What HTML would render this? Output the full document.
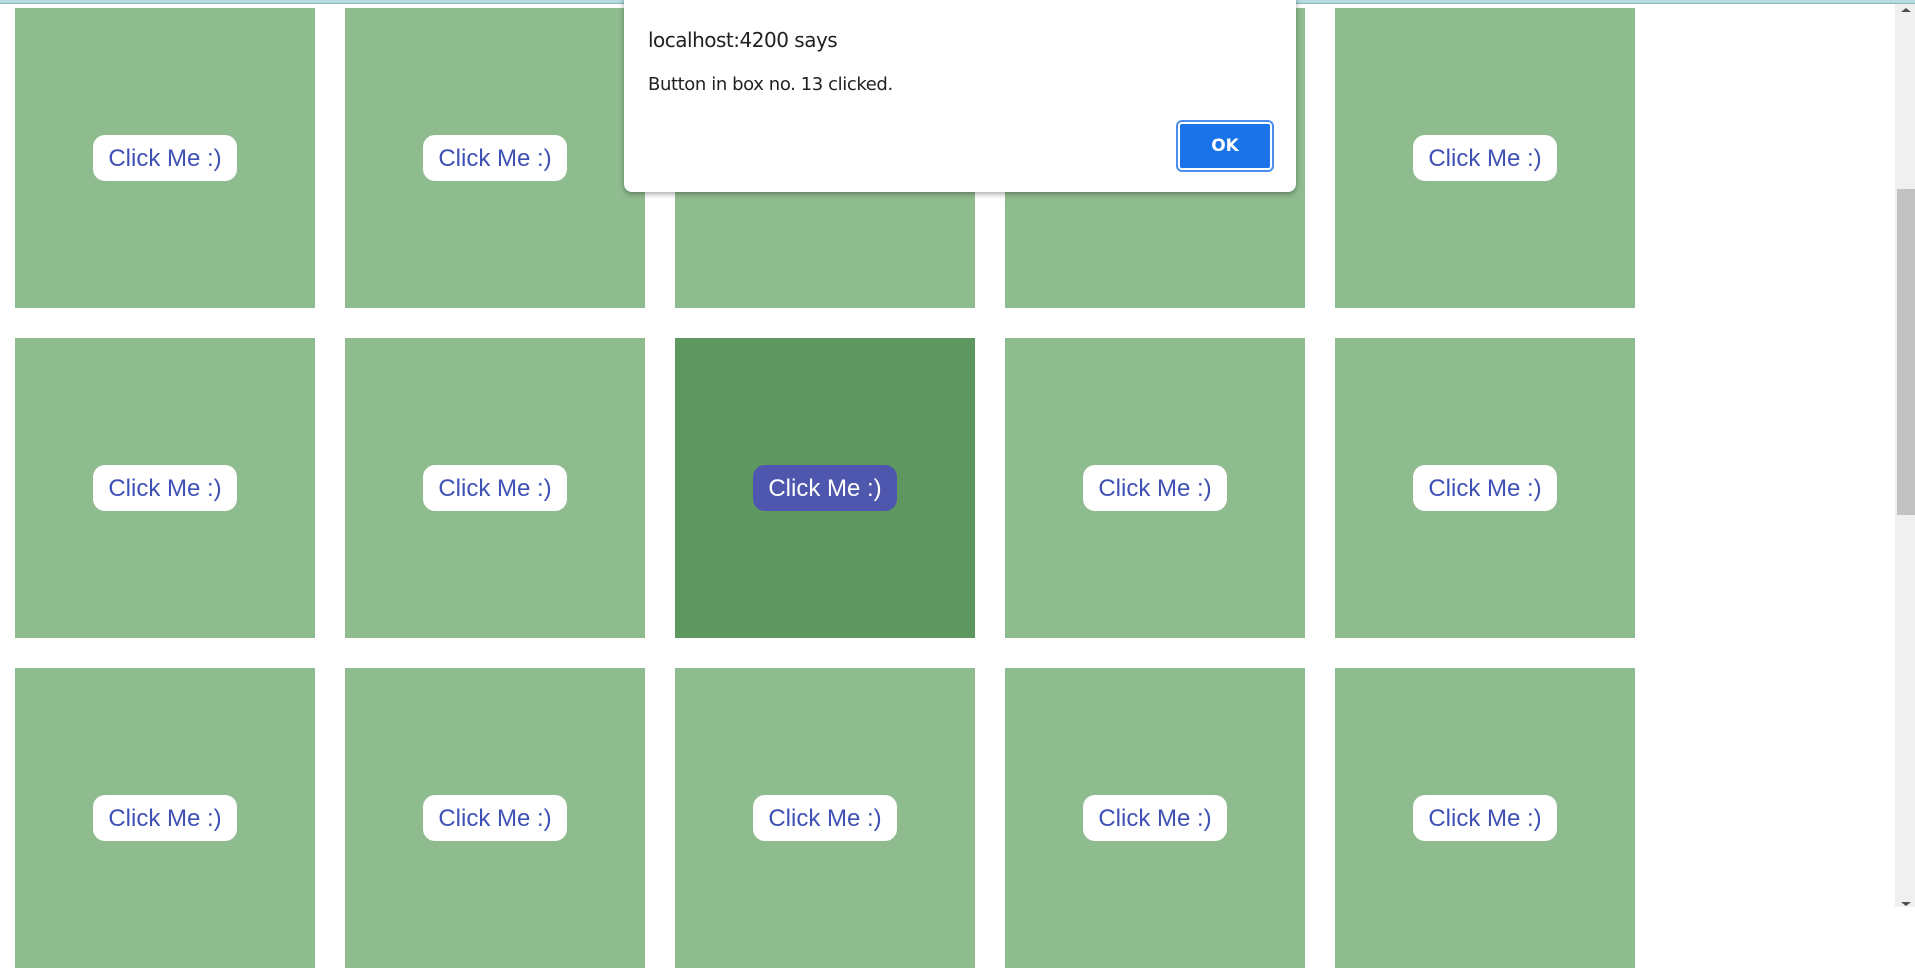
<!DOCTYPE html>
<html><head><style>
body{margin:0;width:1915px;height:907px;overflow:hidden;background:#fff;position:relative;font-family:"Liberation Sans",Arial,sans-serif}
.top{position:absolute;left:0;top:0;width:1915px;height:3px;background:#b2dce0;border-bottom:1px solid #8fb8bc}
.box{position:absolute;width:300px;height:300px;background:#8fbc8f}
.box.a{background:#5e9760}
.btn{position:absolute;left:78px;top:127px;width:144px;height:46px;border-radius:12px;background:#fff;color:#3f51b5;font-size:24px;line-height:47px;text-align:center}
.a .btn{background:#4e56ad;color:#fff}
.sb{position:absolute;left:1895px;top:4px;width:20px;height:903px;background:#f0f0f0}
.th{position:absolute;left:1897px;top:189px;width:18px;height:326px;background:#c1c1c1}
.dlg{position:absolute;left:624px;top:-4px;width:672px;height:196px;background:#fff;border-radius:0 0 8px 8px;box-shadow:0 2px 6px rgba(0,0,0,.35);font-family:"DejaVu Sans","Liberation Sans",sans-serif;color:#202124}
.t{position:absolute;left:24px;top:32px;font-size:20px;letter-spacing:-.5px}
.m{position:absolute;left:24px;top:78px;font-size:18px;letter-spacing:-.4px}
.ok{position:absolute;left:554px;top:126px;width:90px;height:44px;background:#1a73e8;border:2px solid #fff;outline:2px solid #4a8ef0;border-radius:4px;color:#fff;font-size:17px;font-weight:bold;text-align:center;line-height:44px}
</style></head><body>
<div class="top"></div>
<div class="box" style="left:15px;top:8px"><div class="btn">Click Me :)</div></div>
<div class="box" style="left:345px;top:8px"><div class="btn">Click Me :)</div></div>
<div class="box" style="left:675px;top:8px"><div class="btn">Click Me :)</div></div>
<div class="box" style="left:1005px;top:8px"><div class="btn">Click Me :)</div></div>
<div class="box" style="left:1335px;top:8px"><div class="btn">Click Me :)</div></div>
<div class="box" style="left:15px;top:338px"><div class="btn">Click Me :)</div></div>
<div class="box" style="left:345px;top:338px"><div class="btn">Click Me :)</div></div>
<div class="box a" style="left:675px;top:338px"><div class="btn">Click Me :)</div></div>
<div class="box" style="left:1005px;top:338px"><div class="btn">Click Me :)</div></div>
<div class="box" style="left:1335px;top:338px"><div class="btn">Click Me :)</div></div>
<div class="box" style="left:15px;top:668px"><div class="btn">Click Me :)</div></div>
<div class="box" style="left:345px;top:668px"><div class="btn">Click Me :)</div></div>
<div class="box" style="left:675px;top:668px"><div class="btn">Click Me :)</div></div>
<div class="box" style="left:1005px;top:668px"><div class="btn">Click Me :)</div></div>
<div class="box" style="left:1335px;top:668px"><div class="btn">Click Me :)</div></div>
<div class="sb"></div><div class="th"></div>
<div style="position:absolute;left:1901px;top:8px;width:0;height:0;border-left:5px solid transparent;border-right:5px solid transparent;border-bottom:4px solid #505050"></div>
<div style="position:absolute;left:1901px;top:902px;width:0;height:0;border-left:5px solid transparent;border-right:5px solid transparent;border-top:4px solid #505050"></div>
<div class="dlg"><div class="t">localhost:4200 says</div><div class="m">Button in box no. 13 clicked.</div><div class="ok">OK</div></div>
</body></html>
